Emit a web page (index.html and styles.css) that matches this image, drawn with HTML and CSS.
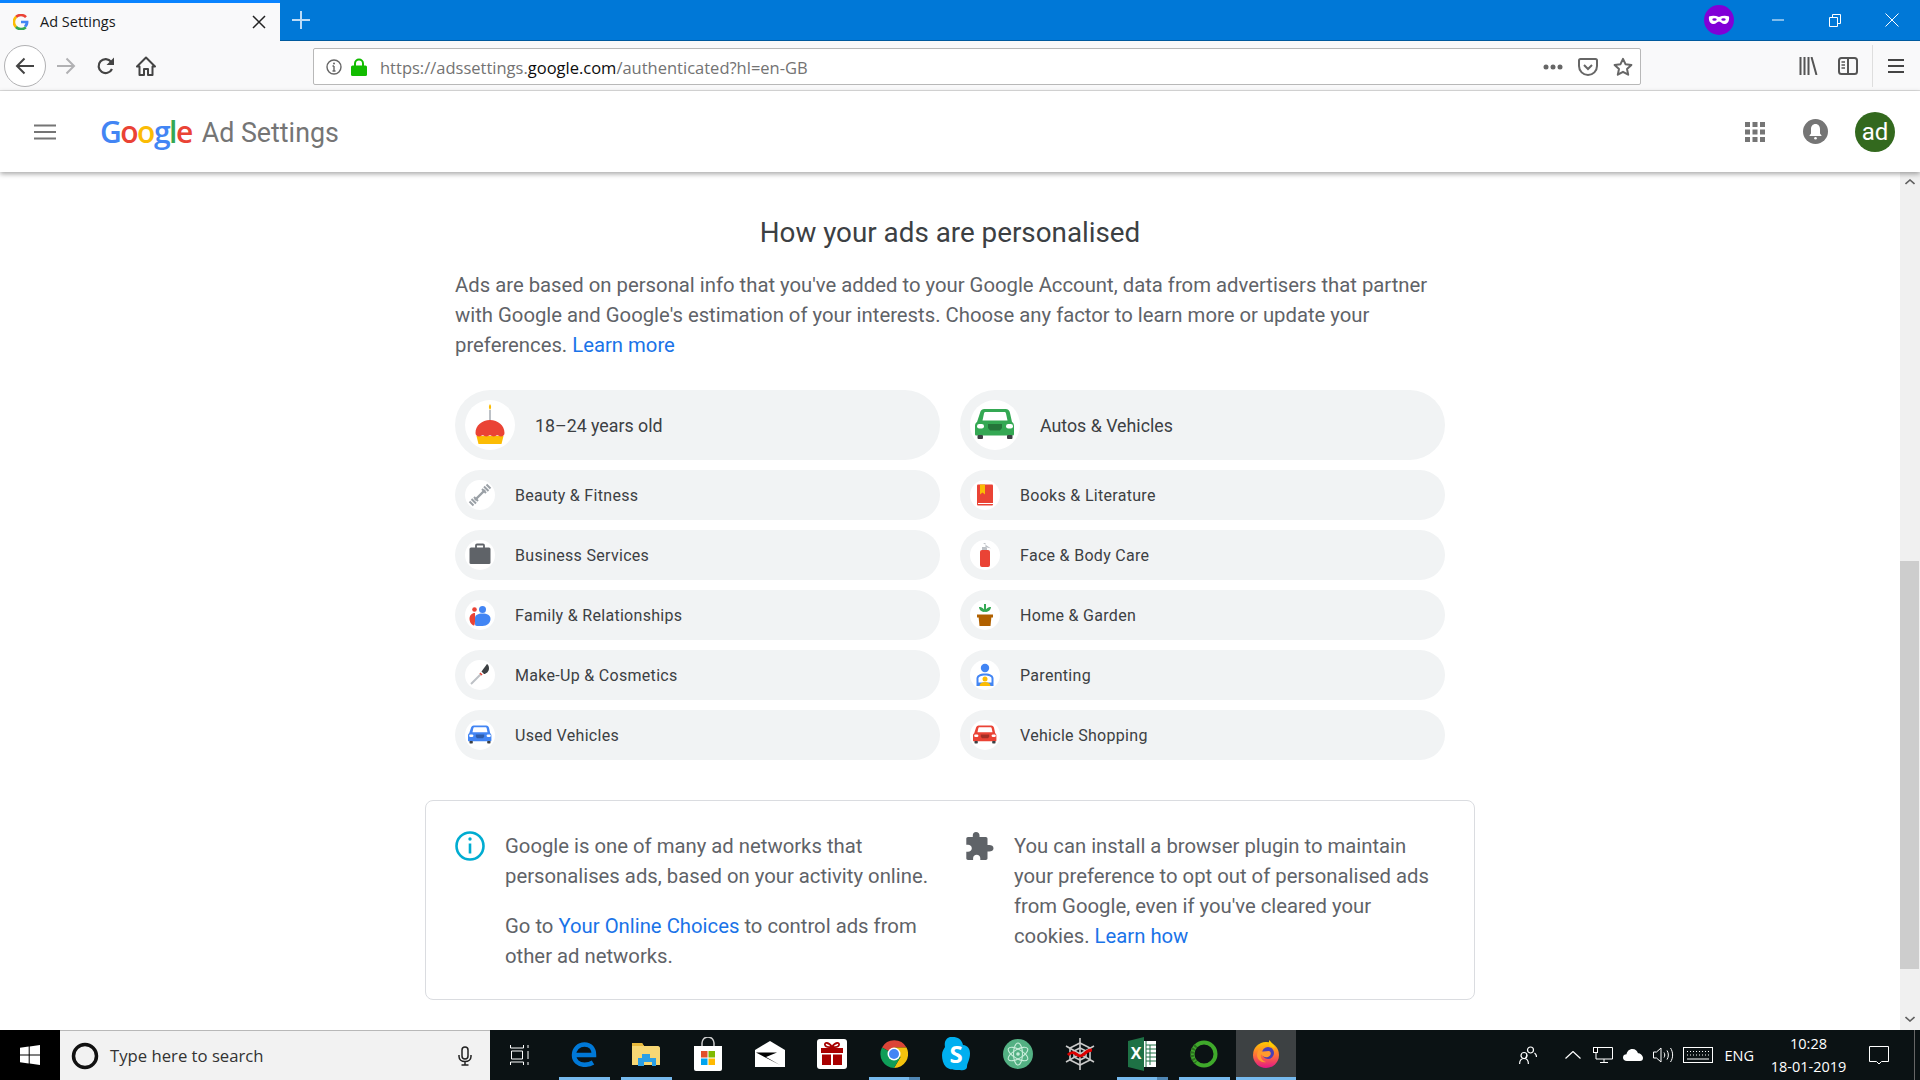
FILE: index.html
```html
<!DOCTYPE html>
<html lang="en-GB">
<head>
    <meta charset="UTF-8">
    <meta name="viewport" content="width=device-width, initial-scale=1.0">
    <title>Ad Settings</title>
    <link rel="stylesheet" href="styles.css">
</head>
<body>
    <svg class="defs" width="0" height="0">
        <symbol id="car" viewBox="0 0 50 50">
            <path d="M10 13c.5-2.500 2-4 4.500-4h21c2.500 0 4 1.500 4.500 4l2 9c1.500 1 2 2.500 2 4v8c0 1-.7 1.500-1.500 1.500h-36C5.700 35.500 5 35 5 34v-8c0-1.500.5-3 2-4z" fill="currentColor"/>
            <path d="M12.500 20.500l1.500-7c.2-1 .7-1.500 1.500-1.500h19c.8 0 1.300.5 1.500 1.500l1.500 7z" fill="#fff"/>
            <rect x="7" y="24" width="7" height="4.500" rx="2.200" fill="#fff"/>
            <rect x="36" y="24" width="7" height="4.500" rx="2.200" fill="#fff"/>
            <path d="M18 24h14v4l-2 2.500H20L18 28z" fill="#000" opacity=".3"/>
            <rect x="7.500" y="35" width="5.500" height="4" rx="1" fill="#3c4043"/>
            <rect x="37" y="35" width="5.500" height="4" rx="1" fill="#3c4043"/>
        </symbol>
    </svg>

    <div class="titlebar">
        <div class="tab">
            <svg class="favicon" viewBox="0 0 16 16" width="16" height="16">
                <path d="M13 3.200A7 7 0 0 0 3 3" fill="none" stroke="#ea4335" stroke-width="2.600"/>
                <path d="M3.200 2.800a7 7 0 0 0 0 10.400" fill="none" stroke="#fbbc05" stroke-width="2.600"/>
                <path d="M3 13a7 7 0 0 0 9.800.3" fill="none" stroke="#34a853" stroke-width="2.600"/>
                <path d="M8 6.700h7.400c.4 3-.6 5.200-2.400 6.700L11 11.500c.8-.6 1.200-1.300 1.400-2.200H8z" fill="#4285f4"/>
            </svg>
            <span class="tab-title">Ad Settings</span>
            <svg class="tab-close" viewBox="0 0 14 14" width="14" height="14"><path d="M1 1l12 12M13 1L1 13" stroke="#222" stroke-width="1.500"/></svg>
        </div>
        <svg class="new-tab" viewBox="0 0 18 18" width="18" height="18"><path d="M9 0v18M0 9h18" stroke="#bcdcf7" stroke-width="2"/></svg>
        <svg class="mask" viewBox="0 0 30 30" width="30" height="30">
            <circle cx="15" cy="15" r="15" fill="#8000d7"/>
            <path d="M5 11.500c3-1 6.500-1 10 .5 3.500-1.500 7-1.500 10-.5.500 3-.3 7-4 7.500-3 .3-4-2.500-6-2.500s-3 2.800-6 2.500c-3.700-.5-4.500-4.500-4-7.500z" fill="#fff"/>
            <ellipse cx="10.500" cy="14.500" rx="2.200" ry="1.200" fill="#8000d7"/>
            <ellipse cx="19.500" cy="14.500" rx="2.200" ry="1.200" fill="#8000d7"/>
        </svg>
        <div class="win-buttons">
            <svg viewBox="0 0 14 14" width="14" height="14"><path d="M1 7h12" stroke="#fff"/></svg>
            <svg viewBox="0 0 14 14" width="14" height="14"><path d="M1.500 4.500h8v9h-8zM4.500 4.500v-3h8v9h-3" fill="none" stroke="#fff"/></svg>
            <svg viewBox="0 0 14 14" width="14" height="14"><path d="M.5.500l13 13M13.500.500l-13 13" stroke="#fff"/></svg>
        </div>
    </div>

    <div class="toolbar">
        <div class="back-btn">
            <svg viewBox="0 0 20 20" width="20" height="20"><path d="M19 10H2M9.500 2.500L2 10l7.500 7.500" fill="none" stroke="#444" stroke-width="2"/></svg>
        </div>
        <svg class="tool-icon forward" viewBox="0 0 20 20" width="20" height="20"><path d="M1 10h17M10.500 2.500L18 10l-7.500 7.500" fill="none" stroke="#b1b1b3" stroke-width="2"/></svg>
        <svg class="tool-icon reload" viewBox="0 0 20 20" width="20" height="20"><path d="M16 13a7 7 0 1 1-.8-7.200" fill="none" stroke="#444" stroke-width="2.200"/><path d="M18 1.500V9h-7.500z" fill="#444"/></svg>
        <svg class="tool-icon home" viewBox="0 0 20 20" width="20" height="20"><path d="M10 1.500L1 10.500h2.500V19h4.500v-6h4v6h4.500v-8.500H19z" fill="none" stroke="#444" stroke-width="2" stroke-linejoin="round"/></svg>
        <div class="urlbar">
            <svg class="url-info" viewBox="0 0 16 16" width="16" height="16"><circle cx="8" cy="8" r="7" fill="none" stroke="#666" stroke-width="1.400"/><path d="M8 7v5M6.500 12h3M6.500 7H8" stroke="#666" stroke-width="1.400"/><circle cx="8" cy="4.500" r="1" fill="#666"/></svg>
            <svg class="url-lock" viewBox="0 0 16 18" width="16" height="18"><path d="M4 8V5.500a4 4 0 0 1 8 0V8" fill="none" stroke="#12bc00" stroke-width="2"/><rect x="0" y="7.500" width="16" height="10.500" rx="1.500" fill="#12bc00"/></svg>
            <span class="url-text">https://adssettings.<b>google.com</b>/authenticated?hl=en-GB</span>
            <svg class="url-dots" viewBox="0 0 20 6" width="20" height="6"><circle cx="3" cy="3" r="2.500" fill="#666"/><circle cx="10" cy="3" r="2.500" fill="#666"/><circle cx="17" cy="3" r="2.500" fill="#666"/></svg>
            <svg class="url-pocket" viewBox="0 0 20 18" width="20" height="18"><path d="M2.500 1h15c.8 0 1.500.7 1.500 1.500V8c0 5-4 9-9 9s-9-4-9-9V2.500C1 1.700 1.700 1 2.500 1z" fill="none" stroke="#666" stroke-width="2"/><path d="M6 7l4 4 4-4" fill="none" stroke="#666" stroke-width="2"/></svg>
            <svg class="url-star" viewBox="0 0 20 20" width="20" height="20"><path d="M10 1.800l2.500 5.400 5.900.7-4.400 4 1.200 5.800L10 14.800l-5.200 2.900L6 11.900l-4.400-4 5.900-.7z" fill="none" stroke="#666" stroke-width="2" stroke-linejoin="round"/></svg>
        </div>
        <svg class="tool-icon library" viewBox="0 0 19 18" width="19" height="18"><path d="M1.500 0v18M5.500 0v18M9.500 0v18M12.500 0l5 18" stroke="#555" stroke-width="2"/></svg>
        <svg class="tool-icon side" viewBox="0 0 20 18" width="20" height="18"><rect x="1" y="1" width="18" height="16" rx="2.500" fill="none" stroke="#555" stroke-width="2"/><path d="M10 1v16" stroke="#555" stroke-width="2"/><path d="M3.500 5H7M3.500 8H7M3.500 11H7" stroke="#555" stroke-width="1.500"/></svg>
        <div class="tool-divider"></div>
        <svg class="tool-icon menu" viewBox="0 0 16 16" width="16" height="16"><path d="M0 2h16M0 8h16M0 14h16" stroke="#444" stroke-width="2"/></svg>
    </div>

    <div class="page">
        <div class="app-header">
            <svg class="burger" viewBox="0 0 22 16" width="22" height="16"><path d="M0 1.500h22M0 8h22M0 14.500h22" stroke="#757575" stroke-width="2"/></svg>
            <div class="logo">
                <span class="g-blue">G</span><span class="g-red">o</span><span class="g-yellow">o</span><span class="g-blue">g</span><span class="g-green">l</span><span class="g-red">e</span>
            </div>
            <div class="product">Ad Settings</div>
            <svg class="apps" viewBox="0 0 20 20" width="20" height="20">
                <path d="M0 0h5v5H0zM7.500 0h5v5h-5zM15 0h5v5h-5zM0 7.500h5v5H0zM7.500 7.500h5v5h-5zM15 7.500h5v5h-5zM0 15h5v5H0zM7.500 15h5v5h-5zM15 15h5v5h-5z" fill="#757575"/>
            </svg>
            <svg class="bell" viewBox="0 0 25 25" width="25" height="25">
                <circle cx="12.500" cy="12.500" r="12.500" fill="#757575"/>
                <path d="M12.500 5c-2.800 0-4.500 2.200-4.500 5v4.500l-1.500 2v.5h12v-.5l-1.500-2V10c0-2.800-1.700-5-4.500-5z" fill="#fff"/>
                <circle cx="12.500" cy="19.300" r="1.300" fill="#fff"/>
            </svg>
            <div class="avatar">ad</div>
        </div>

        <div class="page-body">
            <div class="main">
                <h1>How your ads are personalised</h1>
                <p class="intro">Ads are based on personal info that you've added to your Google Account, data from advertisers that partner with Google and Google's estimation of your interests. Choose any factor to learn more or update your preferences. <a href="#">Learn more</a></p>

                <div class="factors">
                    <div class="pill big">
                        <div class="pill-icon">
                            <svg viewBox="0 0 50 50" width="50" height="50">
                                <path d="M25 4c1.500 2 1.500 4 0 6-1.500-2-1.500-4 0-6z" fill="#fbbc04"/>
                                <rect x="24" y="10" width="2" height="11" fill="#bdc1c6"/>
                                <path d="M13 36l-1.500-.1 2 8.100h23l2-8.100z" fill="#fbbc04"/>
                                <path d="M25 20c-8 0-14.500 5.500-14.500 13 0 2 1.500 3.500 3.500 3.500 1.800 0 2.200-1.300 3.700-1.300s2 1.300 3.600 1.300 2.200-1.300 3.700-1.300 2.100 1.300 3.700 1.300 2.100-1.300 3.600-1.300 1.900 1.300 3.700 1.300c2 0 3.500-1.500 3.500-3.500 0-7.500-6.500-13-14.500-13z" fill="#ea4335"/>
                            </svg>
                        </div>
                        <span>18–24 years old</span>
                    </div>
                    <div class="pill big">
                        <div class="pill-icon car-green"><svg width="50" height="50"><use href="#car"/></svg></div>
                        <span>Autos &amp; Vehicles</span>
                    </div>

                    <div class="pill">
                        <div class="pill-icon">
                            <svg viewBox="0 0 30 30" width="30" height="30"><path d="M10 20l10-10" stroke="#9aa0a6" stroke-width="2.400"/><path d="M6.500 19l4.500 4.500M9 17l4 4M17 9l4 4M19 6.500l4.500 4.500M4.500 21.500l4 4M21.500 4.500l4 4" stroke="#9aa0a6" stroke-width="2"/></svg>
                        </div>
                        <span>Beauty &amp; Fitness</span>
                    </div>
                    <div class="pill">
                        <div class="pill-icon">
                            <svg viewBox="0 0 30 30" width="30" height="30"><rect x="7" y="4.500" width="16" height="21" rx="1" fill="#ea4335"/><path d="M10 4.500h5v10l-2.500-2-2.500 2z" fill="#fbbc04"/><path d="M8 23.500h15" stroke="#fff"/></svg>
                        </div>
                        <span>Books &amp; Literature</span>
                    </div>

                    <div class="pill">
                        <div class="pill-icon">
                            <svg viewBox="0 0 30 30" width="30" height="30"><path d="M11 8V5.500c0-.5.400-1 1-1h6c.6 0 1 .5 1 1V8" fill="none" stroke="#5f6368" stroke-width="1.800"/><rect x="4.500" y="7.500" width="21" height="16.500" rx="1.500" fill="#5f6368"/></svg>
                        </div>
                        <span>Business Services</span>
                    </div>
                    <div class="pill">
                        <div class="pill-icon">
                            <svg viewBox="0 0 30 30" width="30" height="30"><path d="M13 3h2.500v4l5.500 1.500M12 7h5v3h-5z" fill="#bdc1c6"/><rect x="10" y="10" width="10" height="17" rx="2" fill="#ea4335"/></svg>
                        </div>
                        <span>Face &amp; Body Care</span>
                    </div>

                    <div class="pill">
                        <div class="pill-icon">
                            <svg viewBox="0 0 30 30" width="30" height="30"><circle cx="17.500" cy="9.500" r="3.500" fill="#4285f4"/><circle cx="9.500" cy="9.500" r="2.300" fill="#ea4335"/><path d="M10 13c-3.500 0-5.500 2.500-5.500 5.500S6 25 9 25.500c1.500 0 1-12.500 1-12.500z" fill="#ea4335"/><path d="M10 18c0-3 3-4.500 7.500-4.500s8 1.500 8 5.500c0 4-3.500 7-8 7H12c-1.500 0-2-1-2-2z" fill="#4285f4"/></svg>
                        </div>
                        <span>Family &amp; Relationships</span>
                    </div>
                    <div class="pill">
                        <div class="pill-icon">
                            <svg viewBox="0 0 30 30" width="30" height="30"><path d="M15 4v7" stroke="#34a853" stroke-width="2"/><path d="M15 12c-3 0-6-2-6-5 3 0 5.500 1.500 6 5zM15 12c3 0 6-2 6-5-3 0-5.500 1.500-6 5z" fill="#34a853"/><path d="M7 14.500h16v3H7z" fill="#b06000"/><path d="M8.500 16h13l-1 10h-11z" fill="#b06000"/></svg>
                        </div>
                        <span>Home &amp; Garden</span>
                    </div>

                    <div class="pill">
                        <div class="pill-icon">
                            <svg viewBox="0 0 30 30" width="30" height="30"><path d="M6 24l10-10" stroke="#bdc1c6" stroke-width="2"/><path d="M15.500 14.500l1-1" stroke="#ea4335" stroke-width="3"/><path d="M16.500 11.500L22 4c1.500 1 2 2.500 2 4.500 0 3-3 5.500-5 5.500z" fill="#3c4043"/></svg>
                        </div>
                        <span>Make-Up &amp; Cosmetics</span>
                    </div>
                    <div class="pill">
                        <div class="pill-icon">
                            <svg viewBox="0 0 30 30" width="30" height="30"><circle cx="15" cy="8" r="4.200" fill="#4285f4"/><path d="M6.500 26v-7.500c0-3 3-5 8.500-5s8.500 2 8.500 5V26z" fill="#4285f4"/><path d="M8.500 18.500c0-2 3-3 6.500-3s6.500 1 6.500 3v4h-13z" fill="#fff"/><circle cx="15" cy="19" r="2.500" fill="#fbbc04"/><path d="M9.500 26c.5-3 2.500-4 5.500-4s5 1 5.500 4z" fill="#fbbc04"/></svg>
                        </div>
                        <span>Parenting</span>
                    </div>

                    <div class="pill">
                        <div class="pill-icon car-blue"><svg width="30" height="30"><use href="#car"/></svg></div>
                        <span>Used Vehicles</span>
                    </div>
                    <div class="pill">
                        <div class="pill-icon car-red"><svg width="30" height="30"><use href="#car"/></svg></div>
                        <span>Vehicle Shopping</span>
                    </div>
                </div>

                <div class="info-card">
                    <div class="info-col">
                        <svg class="info-icon" viewBox="0 0 30 30" width="30" height="30"><circle cx="15" cy="15" r="13.500" fill="none" stroke="#00acd1" stroke-width="2.600"/><path d="M15 12.500v10" stroke="#00acd1" stroke-width="2.600"/><circle cx="15" cy="8" r="1.700" fill="#00acd1"/></svg>
                        <div class="info-text">
                            <p>Google is one of many ad networks that personalises ads, based on your activity online.</p>
                            <p>Go to <a href="#">Your Online Choices</a> to control ads from other ad networks.</p>
                        </div>
                    </div>
                    <div class="info-col">
                        <svg class="puzzle-icon" viewBox="0 0 28 28" width="28" height="28"><path d="M10 0c2.200 0 3.500 1.500 3.500 3.400V5h6.300c1 0 1.700.8 1.700 1.700v6.300h1.700c2.400 0 4.300 1.100 4.300 3.300s-1.900 3.300-4.300 3.300h-1.700v6.700c0 1-.7 1.700-1.700 1.700h-5.500v-1.800c0-2-1.600-3.400-3.600-3.400s-3.600 1.400-3.600 3.400V28H2c-1 0-1.700-.7-1.700-1.700v-6.600H2c2.100 0 3.800-1.500 3.800-3.500S4.100 12.700 2 12.700H.3V6.700C.3 5.800 1 5 2 5h4.800V3.400C6.800 1.500 7.900 0 10 0z" fill="#5f6368"/></svg>
                        <div class="info-text narrow">
                            <p>You can install a browser plugin to maintain your preference to opt out of personalised ads from Google, even if you've cleared your cookies. <a href="#">Learn how</a></p>
                        </div>
                    </div>
                </div>
            </div>

            <div class="scrollbar">
                <svg class="scroll-arrow" viewBox="0 0 10 6" width="10" height="6"><path d="M.5 5L5 1l4.500 4" fill="none" stroke="#606060" stroke-width="1.600"/></svg>
                <div class="scroll-track"><div class="scroll-thumb"></div></div>
                <svg class="scroll-arrow" viewBox="0 0 10 6" width="10" height="6"><path d="M.5 1L5 5l4.500-4" fill="none" stroke="#606060" stroke-width="1.600"/></svg>
            </div>
        </div>
    </div>

    <div class="taskbar">
        <div class="start">
            <svg viewBox="0 0 20 20" width="20" height="20"><path d="M0 2.800L8.700 1.600V9.500H0zM9.700 1.500L20 0v9.500H9.700zM0 10.500h8.700v7.900L0 17.200zM9.700 10.500H20V20L9.700 18.500z" fill="#fff"/></svg>
        </div>
        <div class="search">
            <svg class="cortana" viewBox="0 0 28 28" width="28" height="28"><circle cx="14" cy="14" r="11.500" fill="none" stroke="#111" stroke-width="3.500"/></svg>
            <span>Type here to search</span>
            <svg class="mic" viewBox="0 0 16 20" width="16" height="20"><rect x="5" y="1" width="6" height="12" rx="3" fill="none" stroke="#222" stroke-width="1.500"/><path d="M2 9v1.500c0 3 2.500 5 6 5s6-2 6-5V9M8 15.500V19M4.500 19h7" fill="none" stroke="#222" stroke-width="1.500"/></svg>
        </div>
        <div class="taskview">
            <svg viewBox="0 0 20 20" width="20" height="20"><path d="M.5 0v3h13V0M.5 20v-3h13v3M1.500 6h11v8h-11zM18 0v3M18 6v8M18 17v3" fill="none" stroke="#fff"/></svg>
        </div>
        <div class="task-icons">
            <div class="slot open">
                <svg viewBox="0 0 26 26" width="26" height="26"><path d="M4.500 14h18.500c0-6.500-3.700-10.500-9.500-10.500-6 0-10.500 4.500-10.500 10.500s4.500 9.800 10.500 9.800c3.500 0 6.200-.8 8.500-2.300" fill="none" stroke="#0078d7" stroke-width="4.500"/></svg>
            </div>
            <div class="slot open">
                <svg viewBox="0 0 28 26" width="28" height="26"><path d="M0 4c0-1 .7-2 2-2h8l2 3h14c1 0 2 1 2 2v17H0z" fill="#f7d774"/><path d="M0 2h10l2 3H0z" fill="#e8b93c"/><path d="M10 13h8v4h6v8h-4v-4h-8v4H6v-8h4z" fill="#2b9fe6"/></svg>
            </div>
            <div class="slot">
                <svg viewBox="0 0 28 34" width="28" height="34"><path d="M8 9V6a6 6 0 0 1 12 0v3" fill="none" stroke="#ccc" stroke-width="1.500"/><path d="M0 9h28v23a2 2 0 0 1-2 2H2a2 2 0 0 1-2-2z" fill="#fff"/><rect x="7" y="14" width="6.500" height="6.500" fill="#e2502a"/><rect x="14.500" y="14" width="6.500" height="6.500" fill="#7fba00"/><rect x="7" y="21.500" width="6.500" height="6.500" fill="#00a4ef"/><rect x="14.500" y="21.500" width="6.500" height="6.500" fill="#ffb900"/></svg>
            </div>
            <div class="slot">
                <svg viewBox="0 0 30 26" width="30" height="26"><path d="M15 0l15 9v17H0V9z" fill="#fff"/><path d="M1 11.500h21l-11 4.500 14 8z" fill="#000"/></svg>
            </div>
            <div class="slot">
                <svg viewBox="0 0 30 30" width="30" height="30"><rect width="30" height="30" rx="3" fill="#fff"/><path d="M4 9h22v5H4zM5 15.500h9V26H5zM16 15.500h9V26h-9z" fill="#a80000"/><path d="M15 8c-3-5-8-5-7-2s4 2 7 2c3 0 6 1 7-2s-4-3-7 2z" fill="none" stroke="#a80000" stroke-width="1.800"/></svg>
            </div>
            <div class="slot open multi">
                <svg viewBox="0 0 28 28" width="28" height="28">
                    <path d="M14 14L2 7.500A14 14 0 0 1 26.500 7.500H14z" fill="#db4437"/>
                    <path d="M14 14l6.500 3L14 28A14 14 0 0 0 26.500 7.500H14z" fill="#f4c20d"/>
                    <path d="M14 14l6.500 3L14 28A14 14 0 0 1 2 7.500z" fill="#0f9d58"/>
                    <circle cx="14" cy="14" r="6.500" fill="#fff"/><circle cx="14" cy="14" r="5" fill="#4285f4"/>
                </svg>
            </div>
            <div class="slot">
                <svg viewBox="0 0 28 34" width="28" height="34"><path d="M8 0c8-1 12 3 13 8 5 .5 7 4 7 8.500C28 23 25 26 25 30c0 2-3 4-7 3-6 0-10 0-14-3-3-3-4-8-4-12 0-4 2-6 3-8C2 5 4 1 8 0z" fill="#00aff0"/><text x="14" y="26" text-anchor="middle" class="skype-s">S</text></svg>
            </div>
            <div class="slot">
                <svg viewBox="0 0 30 30" width="30" height="30"><circle cx="15" cy="15" r="15" fill="#53b083"/><g fill="none" stroke="#c7ecd9" stroke-width="1.100"><ellipse cx="15" cy="15" rx="4.500" ry="11"/><ellipse cx="15" cy="15" rx="4.500" ry="11" transform="rotate(60 15 15)"/><ellipse cx="15" cy="15" rx="4.500" ry="11" transform="rotate(-60 15 15)"/></g><circle cx="15" cy="15" r="1.800" fill="#c7ecd9"/></svg>
            </div>
            <div class="slot">
                <svg viewBox="0 0 30 34" width="30" height="34"><g fill="none" stroke="#c9c9c9" stroke-width="1.600"><path d="M15 1v32M1 9l28 16M29 9L1 25"/><path d="M15 6l10 5v12l-10 5-10-5V11z"/><path d="M15 11l6 3v6l-6 3-6-3v-6z"/></g><path d="M3 18c3-3 5-3 8-1s5 3 8 0 5-4 8-4" fill="none" stroke="#d00" stroke-width="3"/></svg>
            </div>
            <div class="slot open multi">
                <svg viewBox="0 0 28 34" width="28" height="34"><path d="M0 4l16-4v34L0 30z" fill="#1e7145"/><text x="8" y="22" text-anchor="middle" class="excel-x">X</text><rect x="16" y="4" width="12" height="26" fill="#fff"/><path d="M18 4v26M22 8v20M18 8h10M18 12h10M18 16h10M18 20h10M18 24h10" stroke="#1e7145" stroke-width="1"/></svg>
            </div>
            <div class="slot open">
                <svg viewBox="0 0 28 28" width="28" height="28"><circle cx="14" cy="14" r="11.500" fill="none" stroke="#3fa92b" stroke-width="4"/><path d="M6 5.500a11.500 11.500 0 0 0 0 17" fill="none" stroke="#2c6e20" stroke-width="4" stroke-dasharray="2 1.500"/></svg>
            </div>
            <div class="slot open active">
                <svg viewBox="0 0 28 28" width="28" height="28"><defs><linearGradient id="fx" x1="0" y1="0" x2="0" y2="1"><stop offset="0" stop-color="#ffcb00"/><stop offset=".5" stop-color="#ff7139"/><stop offset="1" stop-color="#e31587"/></linearGradient></defs><circle cx="14" cy="15" r="13" fill="url(#fx)"/><path d="M17 0c3 3 5 5 6 8l-6-2z" fill="#ffcb00"/><circle cx="16" cy="13" r="6" fill="#4a3fb5"/><path d="M7 9c2 4 6 2 10 2 3 1 2 5-1 6-3 1-6-1-7-3-1 3 1 7 5 8-4 1-9-2-9-7 0-2 1-4 2-6z" fill="#ff9a2e"/></svg>
            </div>
        </div>
        <div class="tray">
            <svg class="t-people" viewBox="0 0 18 19" width="18" height="19"><g fill="none" stroke="#fff" stroke-width="1.200"><circle cx="11.500" cy="4" r="3"/><path d="M8 9c-1 1.500-1 3-1 3M15.500 7c1.500 1 2 3 2 4"/><circle cx="5" cy="9.500" r="3"/><path d="M.6 18c0-3 1.400-5.500 4.400-5.500s4.400 2.500 4.400 5.500"/></g></svg>
            <svg class="t-chevron" viewBox="0 0 16 8" width="16" height="8"><path d="M.5 7.500L8 .5l7.500 7" fill="none" stroke="#fff" stroke-width="1.200"/></svg>
            <svg class="t-monitor" viewBox="0 0 20 16" width="20" height="16"><path d="M4 .5h15.500v11.500H3V5M11 12v3M7 15.500h8" fill="none" stroke="#fff"/><rect x=".5" y=".5" width="4" height="5" fill="#000" stroke="#fff"/></svg>
            <svg class="t-cloud" viewBox="0 0 20 12" width="20" height="12"><path d="M4 12C1.500 12 0 10.500 0 8.500S1.500 5.300 3.500 5.300C4 2.500 6 0 9.500 0 12.500 0 14 2 15 4.200c3 0 5 2.800 5 4.800s-1 3-3 3z" fill="#fff"/></svg>
            <svg class="t-speaker" viewBox="0 0 21 16" width="21" height="16"><path d="M.5 5h3L8 1v14l-4.500-4h-3zM11 5.500c1 1.500 1 3.500 0 5M14 3.500c1.800 2.500 1.800 6.500 0 9M17.500 1c2.800 4 2.800 10 0 14" fill="none" stroke="#fff"/></svg>
            <svg class="t-keyboard" viewBox="0 0 30 16" width="30" height="16"><rect x=".5" y=".5" width="29" height="15" fill="none" stroke="#fff"/><path d="M4 4.500h22M4 8h22" stroke="#fff" stroke-dasharray="1 2"/><path d="M4 12h22" stroke="#fff"/></svg>
            <span class="t-lang">ENG</span>
            <div class="t-clock">
                <span>10:28</span>
                <span>18-01-2019</span>
            </div>
            <svg class="t-notify" viewBox="0 0 20 19" width="20" height="19"><path d="M.5.500h19v15h-7L10 18l-2.500-2.500h-7z" fill="none" stroke="#fff"/></svg>
            <div class="show-desktop"></div>
        </div>
    </div>
</body>
</html>
```

FILE: styles.css
```css
* {
    box-sizing: border-box;
}
body {
    margin: 0;
    width: 1920px;
    height: 1080px;
    display: flex;
    flex-direction: column;
    overflow: hidden;
    font-family: "Roboto", "Liberation Sans", sans-serif;
    background: #fff;
}
svg {
    display: block;
    flex: none;
}
.defs {
    position: absolute;
}

/* browser window */
.titlebar {
    height: 41px;
    display: flex;
    align-items: center;
    background: #0078d7;
    border-bottom: 1px solid #005a9e;
}
.tab {
    width: 280px;
    height: 41px;
    display: flex;
    align-items: center;
    padding: 0 14px 0 13px;
    background: #f9f9fa;
    border-top: 3px solid #0a84ff;
}
.tab-title {
    margin-left: 11px;
    font-family: "Open Sans", sans-serif;
    font-size: 14.500px;
    color: #18191a;
}
.tab-close {
    margin-left: auto;
}
.new-tab {
    margin-left: 12px;
}
.mask {
    margin-left: auto;
}
.win-buttons {
    display: flex;
    gap: 43px;
    margin: 0 21px 0 37px;
}
.toolbar {
    height: 50px;
    display: flex;
    align-items: center;
    background: #f9f9fa;
    border-bottom: 1px solid #dedede;
}
.back-btn {
    width: 42px;
    height: 42px;
    margin-left: 4px;
    display: flex;
    align-items: center;
    justify-content: center;
    background: #fff;
    border: 1px solid #b1b1b3;
    border-radius: 50%;
}
.forward {
    margin-left: 10px;
}
.reload {
    margin-left: 20px;
}
.home {
    margin-left: 20px;
}
.urlbar {
    width: 1328px;
    height: 37px;
    margin: 2px 0 0 157px;
    display: flex;
    align-items: center;
    background: #fff;
    border: 1px solid #b8b8b8;
    border-radius: 2px;
}
.url-info {
    margin-left: 12px;
}
.url-lock {
    margin-left: 9px;
}
.url-text {
    margin-left: 13px;
    padding-top: 2px;
    font-family: "Open Sans", sans-serif;
    font-size: 16.500px;
    color: #737373;
}
.url-text b {
    font-weight: 400;
    color: #0c0c0d;
}
.url-dots {
    margin-left: auto;
}
.url-pocket {
    margin-left: 15px;
}
.url-star {
    margin: 0 7px 0 15px;
}
.library {
    margin-left: 158px;
}
.side {
    margin-left: 20px;
}
.tool-divider {
    width: 1px;
    height: 42px;
    margin-left: 14px;
    background: #dedede;
}
.menu {
    margin-left: 15px;
}

/* page */
.page {
    flex: 1;
    min-height: 0;
    display: flex;
    flex-direction: column;
}
.app-header {
    position: relative;
    height: 81px;
    display: flex;
    align-items: center;
    padding-left: 34px;
    background: #fff;
    box-shadow: 0 2px 5px rgba(0, 0, 0, 0.35);
}
.logo {
    margin-left: 44px;
    font-family: "Open Sans", sans-serif;
    font-size: 30px;
    font-weight: 600;
    letter-spacing: -1.500px;
    line-height: 30px;
}
.g-blue { color: #4285f4; }
.g-red { color: #ea4335; }
.g-yellow { color: #fbbc05; }
.g-green { color: #34a853; }
.product {
    margin-left: 10px;
    padding-top: 2px;
    font-size: 26.800px;
    color: #757575;
}
.apps {
    margin-left: auto;
}
.bell {
    margin-left: 38px;
}
.avatar {
    width: 40px;
    height: 40px;
    margin: 0 25px 0 27px;
    display: flex;
    align-items: center;
    justify-content: center;
    border-radius: 50%;
    background: #33691e;
    color: #fff;
    font-size: 24px;
}
.page-body {
    flex: 1;
    min-height: 0;
    display: flex;
}
.main {
    flex: 1;
    padding-top: 41px;
}
h1 {
    margin: 0 0 17px;
    font-size: 27.800px;
    font-weight: 400;
    line-height: 40px;
    text-align: center;
    color: #3c4043;
}
.intro {
    width: 990px;
    margin: 0 auto 30px;
    font-size: 20.300px;
    line-height: 30px;
    color: #5f6368;
}
a {
    color: #1a73e8;
    text-decoration: none;
}
.factors {
    width: 990px;
    margin: 0 auto 40px;
    display: grid;
    grid-template-columns: 485px 485px;
    column-gap: 20px;
    row-gap: 10px;
}
.pill {
    height: 50px;
    display: flex;
    align-items: center;
    padding-left: 10px;
    background: #f1f3f4;
    border-radius: 25px;
    font-size: 16px;
    letter-spacing: 0.300px;
    color: #3c4043;
}
.pill-icon {
    width: 30px;
    height: 30px;
    margin-right: 20px;
    background: #fff;
    border-radius: 50%;
}
.pill.big {
    height: 70px;
    border-radius: 35px;
    font-size: 17.800px;
    letter-spacing: 0;
}
.big .pill-icon {
    width: 50px;
    height: 50px;
}
.car-green { color: #34a853; }
.car-blue { color: #4285f4; }
.car-red { color: #ea4335; }
.info-card {
    width: 1050px;
    margin: 0 auto;
    padding: 30px 29px 28px;
    display: grid;
    grid-template-columns: 485px 485px;
    column-gap: 20px;
    background: #fff;
    border: 1px solid #dadce0;
    border-radius: 8px;
}
.info-col {
    display: flex;
    align-items: flex-start;
}
.info-icon {
    margin: 0 20px 0 0;
}
.puzzle-icon {
    margin: 1px 20px 0 6px;
}
.info-text {
    font-size: 20.300px;
    line-height: 30px;
    color: #5f6368;
}
.info-text.narrow {
    width: 425px;
}
.info-text p {
    margin: 0 0 20px;
}
.info-text p:last-child {
    margin-bottom: 0;
}
.scrollbar {
    width: 20px;
    display: flex;
    flex-direction: column;
    align-items: center;
    padding: 7px 0 8px;
    background: #f0f0f0;
}
.scroll-track {
    flex: 1;
    width: 100%;
    padding: 376px 1px 0 0;
}
.scroll-thumb {
    height: 408px;
    background: #cdcdcd;
}

/* windows taskbar */
.taskbar {
    height: 50px;
    display: flex;
    background: #0b1214;
}
.start {
    width: 60px;
    display: flex;
    align-items: center;
    justify-content: center;
    background: #000;
}
.search {
    width: 430px;
    display: flex;
    align-items: center;
    padding-left: 11px;
    background: #f2f2f2;
    border-top: 1px solid #b8b8b8;
    font-family: "Open Sans", sans-serif;
    font-size: 16.700px;
    color: #333;
}
.search span {
    margin-left: 11px;
}
.mic {
    margin-left: auto;
    margin-right: 17px;
}
.taskview {
    width: 69px;
    display: flex;
    align-items: center;
    padding-left: 20px;
}
.task-icons {
    display: flex;
    gap: 11px;
}
.slot {
    position: relative;
    width: 51px;
    display: flex;
    align-items: center;
    justify-content: center;
    padding-right: 2px;
    border-bottom: 3px solid transparent;
}
.slot.open {
    border-bottom-color: #76b9ed;
}
.slot.multi::after {
    content: "";
    position: absolute;
    right: 0;
    bottom: -3px;
    width: 11px;
    height: 3px;
    background: #4f86b3;
}
.slot.active {
    width: 60px;
    margin-left: -5px;
    padding-right: 0;
    background: #3d4143;
}
.skype-s {
    font-family: "Open Sans", sans-serif;
    font-size: 24px;
    font-weight: 700;
    fill: #fff;
}
.excel-x {
    font-family: "Open Sans", sans-serif;
    font-size: 16px;
    font-weight: 700;
    fill: #fff;
}
.tray {
    margin-left: auto;
    display: flex;
    align-items: center;
    color: #fff;
    font-family: "Open Sans", sans-serif;
    font-size: 14.500px;
}
.t-chevron { margin-left: 28px; }
.t-monitor { margin-left: 12px; }
.t-cloud { margin-left: 10px; }
.t-speaker { margin-left: 10px; }
.t-keyboard { margin-left: 9px; }
.t-lang { margin-left: 11px; }
.t-clock {
    width: 75px;
    margin-left: 17px;
    display: flex;
    flex-direction: column;
    align-items: center;
    gap: 3px;
    line-height: 20px;
    white-space: nowrap;
}
.t-notify { margin-left: 23px; }
.show-desktop {
    width: 6px;
    height: 100%;
    margin-left: 25px;
    border-left: 1px solid #666;
}
```
